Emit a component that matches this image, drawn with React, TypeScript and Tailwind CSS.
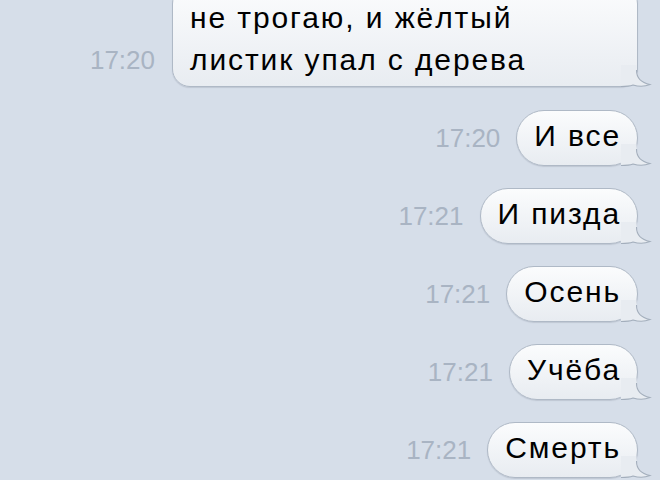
import React from 'react';

const Tail = () => (
  <svg
    className="absolute right-[-14px] bottom-[-1px] overflow-visible"
    width="30"
    height="28"
    viewBox="0 0 30 28"
  >
    <path
      d="M0 27.5 L0 6 L15.5 6 C15.5 17 19 23.5 29 25.5 C23 28 17 27.5 12 26 C8 27.5 4 27.5 0 27.5 Z"
      fill="#e8ecf1"
    />
    <path
      d="M15.5 11 C15.5 18 19 23.5 29 25.5 C23 28 17 27.5 12 26 C8 27.5 4 27.5 0 27.5"
      fill="none"
      stroke="#a3aebc"
      strokeWidth="1.1"
    />
  </svg>
);

const Bubble = ({ children, className = '' }: { children: React.ReactNode; className?: string }) => (
  <div
    className={`relative border border-[#afb9c6] bg-gradient-to-b from-[#fbfcfd] to-[#e8ecf1] text-black shadow-[0_1px_1px_rgba(60,70,90,0.15)] ${className}`}
  >
    {children}
    <Tail />
  </div>
);

const Time = ({ t, className = '' }: { t: string; className?: string }) => (
  <span className={`text-[26px] leading-none text-[#a9b4c3] ${className}`}>{t}</span>
);

const messages = [
  { time: '17:20', text: 'И все' },
  { time: '17:21', text: 'И пизда' },
  { time: '17:21', text: 'Осень' },
  { time: '17:21', text: 'Учёба' },
  { time: '17:21', text: 'Смерть' },
];

export default function App() {
  return (
    <div
      className="w-[660px] h-[480px] overflow-hidden bg-[#d6dee9] pr-[22px]"
      style={{ fontFamily: '"Liberation Sans", Arial, sans-serif' }}
    >
      <div className="flex justify-end items-end gap-[17px] mt-[-14px]">
        <Time t="17:20" className="mb-[14px]" />
        <Bubble className="w-[466px] rounded-[18px] pt-[10px] pb-[5px] pl-[17px] text-[30px] leading-[42px] tracking-[1.9px]">
          <div>не трогаю, и жёлтый</div>
          <div>листик упал с дерева</div>
        </Bubble>
      </div>

      <div className="flex flex-col items-end mt-[23px] gap-[22px]">
        {messages.map((m, i) => (
          <div key={i} className="flex items-center gap-[16px]">
            <Time t={m.time} />
            <Bubble className="h-[56px] rounded-full pl-[17px] pr-[16px] pb-[5px] flex items-center text-[30px] leading-none tracking-[1.9px]">
              {m.text}
            </Bubble>
          </div>
        ))}
      </div>
    </div>
  );
}
